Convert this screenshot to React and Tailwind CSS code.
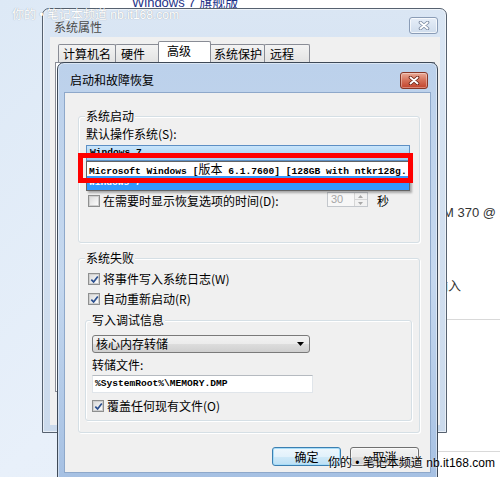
const ui = "font-['Noto_Sans_CJK_SC','Liberation_Sans',sans-serif]";
const mono = "font-['Liberation_Mono','Noto_Sans_CJK_SC',monospace]";
const btnFace = "bg-[linear-gradient(#f2f2f2,#ebebeb_50%,#dddddd_50%,#cfcfcf)]";

function XGlyph({ outline }) {
  return (
    <svg width="12" height="9" viewBox="0 0 12 9">
      <path d="M2.5 1.5 L9.5 7.5 M9.5 1.5 L2.5 7.5" stroke={outline} strokeWidth="3.6" strokeLinecap="round" fill="none" />
      <path d="M2.5 1.5 L9.5 7.5 M9.5 1.5 L2.5 7.5" stroke="#fff" strokeWidth="1.9" strokeLinecap="round" fill="none" />
    </svg>
  );
}

function CheckBox({ checked }) {
  return (
    <span className="flex h-[12px] w-[12px] shrink-0 items-center justify-center border border-[#8e8f8f] bg-[#f4f4f4]">
      <span className="relative flex h-[10px] w-[10px] items-center justify-center border border-[#cfcfcf] bg-gradient-to-br from-[#dcdcdc] to-[#fcfcfc]">
        {checked && (
          <svg viewBox="0 0 9 9" className="absolute h-[9px] w-[9px]">
            <path d="M1.3 4.6 L3.6 6.9 L7.8 1.4" fill="none" stroke="#2b4f8f" strokeWidth="1.7" />
          </svg>
        )}
      </span>
    </span>
  );
}

function Group({ label, labelLeft, className, children }) {
  return (
    <div className={`relative rounded-[3px] border border-[#d5dfe5] shadow-[inset_1px_1px_0_#fff,1px_1px_0_#fff] ${className}`}>
      <span className={`absolute top-[-8px] bg-[#f0f0f0] px-[1px] leading-[14px] ${labelLeft}`}>{label}</span>
      {children}
    </div>
  );
}

export default function App() {
  return (
    <div className={`relative h-[477px] w-[500px] overflow-hidden bg-gradient-to-br from-[#dde9f6] via-[#e8f0fa] to-[#e3edf8] text-[12px] text-black ${ui}`}>
      {/* window behind the dialogs */}
      <div className="absolute inset-y-0 left-[90px] right-0 flex flex-col bg-white text-[#333]">
        <p className="-mt-[5px] ml-[42px] whitespace-nowrap font-['Liberation_Sans','Noto_Sans_CJK_SC',sans-serif] text-[13px] leading-[15px] text-[#1e3287]">
          Windows 7 旗舰版
        </p>
        <p className="ml-[353px] mt-[195px] whitespace-nowrap font-['Liberation_Sans',sans-serif] text-[13px] leading-[16px]">M 370 @ 1.73GHz</p>
        <p className="ml-[345px] mt-[56px] whitespace-nowrap text-[13px] leading-[16px]">输入</p>
        <div className="ml-[357px] mt-[26px] h-px bg-[#d9d9d9]" />
        <div className="ml-[347px] mt-[131px] h-px bg-[#d9d9d9]" />
      </div>

      {/* 系统属性 */}
      <div className="absolute left-[42px] top-[8px] flex h-[425px] w-[405px] flex-col rounded-t-[7px] border border-[#56616f] bg-gradient-to-b from-[#dae6f4] to-[#cbdaec] shadow-[inset_0_0_0_1px_rgba(255,255,255,0.55)]">
        <div className="flex h-[28px] items-start justify-between pl-[11px] pr-[8px] pt-[8px]">
          <span className="mt-[2px] leading-[16px] text-[#4a4a4a]">系统属性</span>
          <span className="flex h-[17px] w-[29px] items-center justify-center rounded-[3px] border border-[#8a9cb6] bg-gradient-to-b from-[#e6eef8] to-[#cfdcec] shadow-[inset_0_0_0_1px_rgba(255,255,255,0.7)]">
            <XGlyph outline="#7d8ca3" />
          </span>
        </div>
        <div className="mb-[7px] ml-[7px] mr-[6px] flex flex-1 flex-col bg-[#f0f0f0]">
          <div className="mt-[4px] flex h-[21px] items-end pl-[8px]">
            <span className="h-[18px] w-[58px] rounded-t-[2px] border border-b-0 border-[#898c95] bg-gradient-to-b from-[#f3f3f3] to-[#e3e3e3] pl-[4px] leading-[17px]">计算机名</span>
            <span className="-ml-px h-[18px] w-[45px] rounded-t-[2px] border border-b-0 border-[#898c95] bg-gradient-to-b from-[#f3f3f3] to-[#e3e3e3] pl-[5px] leading-[17px]">硬件</span>
            <span className="relative z-10 -ml-[2px] h-[21px] w-[53px] rounded-t-[2px] border border-b-0 border-[#898c95] bg-white pl-[8px] leading-[18px]">高级</span>
            <span className="-ml-[2px] h-[18px] w-[56px] rounded-t-[2px] border border-b-0 border-[#898c95] bg-gradient-to-b from-[#f3f3f3] to-[#e3e3e3] pl-[4px] leading-[17px]">系统保护</span>
            <span className="-ml-px h-[18px] w-[46px] rounded-t-[2px] border border-b-0 border-[#898c95] bg-gradient-to-b from-[#f3f3f3] to-[#e3e3e3] pl-[5px] leading-[17px]">远程</span>
          </div>
          <div className="mb-[33px] ml-[5px] mr-[5px] flex-1 border border-[#898c95] bg-white" />
        </div>
      </div>

      {/* 启动和故障恢复 */}
      <div className="absolute left-[57px] top-[62px] flex h-[430px] w-[381px] flex-col rounded-t-[7px] border border-[#3e4957] bg-gradient-to-b from-[#bcd1eb] via-[#c5d8ef] to-[#a4bfe2] shadow-[inset_0_0_0_1px_rgba(255,255,255,0.45)]">
        <div className="flex h-[30px] items-start justify-between pl-[12px] pr-[9px] pt-[9px]">
          <span className="leading-[16px]">启动和故障恢复</span>
          <span className="flex h-[17px] w-[28px] items-center justify-center rounded-[3px] border border-[#863626] bg-gradient-to-b from-[#e9ab98] via-[#d46f58] to-[#c2412a] shadow-[inset_0_0_0_1px_rgba(255,255,255,0.35)]">
            <XGlyph outline="#6a2114" />
          </span>
        </div>

        <div className="relative ml-[7px] flex h-[379px] w-[365px] flex-col bg-[#f0f0f0] shadow-[0_0_0_1px_#8ea8ca]">
          <Group label="系统启动" labelLeft="left-[6px]" className="ml-[13px] mt-[23px] h-[127px] w-[342px]">
            <p className="ml-[7px] mt-[10px] leading-[14px]">默认操作系统(S):</p>
            <div className={`ml-[7px] mt-[4px] h-[16px] w-[324px] border border-[#5d8fc4] bg-[linear-gradient(#c9e5fb,#9ccbf0)] pl-[3px] text-[9.6px] font-bold leading-[14px] ${mono}`}>
              Windows 7
            </div>
            <div className={`absolute left-[7px] top-[44px] z-10 flex h-[30px] w-[324px] flex-col border border-[#646464] bg-white text-[9.6px] font-bold leading-[14px] shadow-[2px_2px_2px_rgba(0,0,0,0.3)] ${mono}`}>
              <span className="h-[14px] whitespace-nowrap pl-[2px]">
                Microsoft Windows [<span className={`text-[12px] font-normal ${ui}`}>版本</span> 6.1.7600] [128GB with ntkr128g.
              </span>
              <span className="h-[14px] bg-[#3399ff] pl-[2px] text-white">Windows 7</span>
            </div>
            <div className="mt-[32px] flex h-[16px] items-center pl-[9px] pr-[30px]">
              <CheckBox />
              <span className="ml-[3px] leading-[14px]">在需要时显示恢复选项的时间(D):</span>
              <div className="ml-auto -mt-[3px] flex h-[15px] w-[41px] border border-[#c3c7cc] bg-[#f7f7f7]">
                <span className="flex-1 pl-[3px] font-['Liberation_Sans',sans-serif] text-[11px] leading-[13px] text-[#a6a6a6]">30</span>
                <div className="flex w-[13px] flex-col border-l border-[#d6d6d6] bg-[#f2f2f2]">
                  <span className="flex flex-1 items-center justify-center border-b border-[#d6d6d6]">
                    <svg width="5" height="3" viewBox="0 0 5 3"><path d="M0 3 L2.5 0 L5 3Z" fill="#a8a8a8" /></svg>
                  </span>
                  <span className="flex flex-1 items-center justify-center">
                    <svg width="5" height="3" viewBox="0 0 5 3"><path d="M0 0 L2.5 3 L5 0Z" fill="#a8a8a8" /></svg>
                  </span>
                </div>
              </div>
              <span className="ml-[9px] leading-[14px]">秒</span>
            </div>
          </Group>

          <Group label="系统失败" labelLeft="left-[6px]" className="ml-[13px] mt-[15px] h-[175px] w-[342px]">
            <div className="mt-[12px] flex h-[16px] items-center pl-[9px]">
              <CheckBox checked />
              <span className="ml-[3px] leading-[14px]">将事件写入系统日志(W)</span>
            </div>
            <div className="mt-[4px] flex h-[16px] items-center pl-[9px]">
              <CheckBox checked />
              <span className="ml-[3px] leading-[14px]">自动重新启动(R)</span>
            </div>
            <Group label="写入调试信息" labelLeft="left-[5px]" className="ml-[6px] mt-[13px] h-[101px] w-[327px]">
              <div className={`ml-[6px] mt-[14px] flex h-[18px] w-[218px] items-center justify-between rounded-[3px] border border-[#7a7a7a] ${btnFace} pl-[3px] pr-[5px]`}>
                <span className="leading-[14px]">核心内存转储</span>
                <svg width="7" height="4" viewBox="0 0 7 4"><path d="M0 0 L7 0 L3.5 4Z" fill="#000" /></svg>
              </div>
              <p className="ml-[6px] mt-[5px] leading-[14px]">转储文件:</p>
              <div className={`ml-[6px] mt-[3px] h-[18px] w-[221px] border border-[#e0e5ea] border-t-[#b5bac0] bg-white pl-[2px] text-[9.6px] font-bold leading-[16px] ${mono}`}>
                %SystemRoot%\MEMORY.DMP
              </div>
              <div className="mt-[5px] flex h-[16px] items-center pl-[6px]">
                <CheckBox checked />
                <span className="ml-[3px] leading-[14px]">覆盖任何现有文件(O)</span>
              </div>
            </Group>
          </Group>

          <div className="mt-[14px] flex justify-end gap-[9px] pr-[11px]">
            <span className="flex h-[19px] w-[69px] items-center justify-center rounded-[3px] border border-[#3c7fb1] bg-[linear-gradient(#eef7fd,#e2f1fb_50%,#cfe9f8_50%,#bcdff4)] shadow-[inset_0_0_0_1px_#a6dcf8] leading-[14px]">
              确定
            </span>
            <span className={`flex h-[19px] w-[69px] items-center justify-center rounded-[3px] border border-[#707070] ${btnFace} shadow-[inset_0_0_0_1px_rgba(255,255,255,0.6)] leading-[14px]`}>
              取消
            </span>
          </div>

          {/* red annotation frame */}
          <div className="absolute left-[13px] top-[60px] z-20 h-[30px] w-[335px] border-[5px] border-[#ff0000]" />
        </div>
      </div>

      {/* watermarks */}
      <p className="absolute left-[12px] top-[7px] whitespace-nowrap font-['Liberation_Sans','Noto_Sans_CJK_SC',sans-serif] text-[12px] leading-[16px] text-white [text-shadow:0_0_1px_rgba(0,0,0,0.35)]">
        你的 • 笔记本频道 nb.it168.com
      </p>
      <p className="absolute left-[328px] top-[455px] whitespace-nowrap font-['Liberation_Sans','Noto_Sans_CJK_SC',sans-serif] text-[12px] leading-[16px] text-black [text-shadow:0_0_2px_#fff]">
        你的 • 笔记本频道 nb.it168.com
      </p>
    </div>
  );
}
